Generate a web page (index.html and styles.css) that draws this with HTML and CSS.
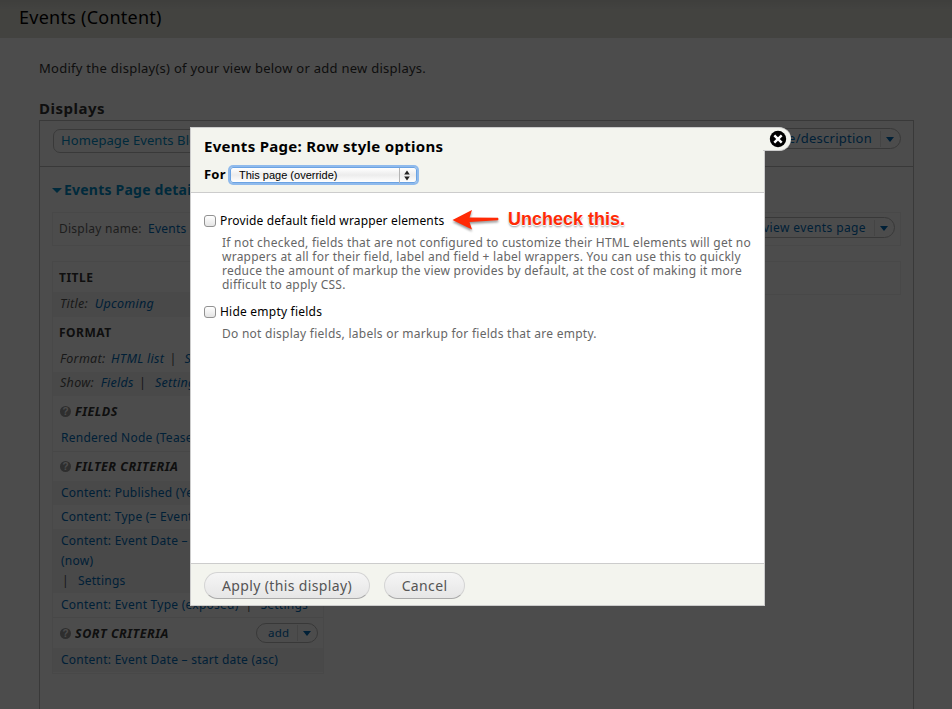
FILE: index.html
```
<!DOCTYPE html>
<html lang="en">
<head>
<meta charset="utf-8">
<title>Events (Content)</title>
<link rel="stylesheet" href="styles.css">
</head>
<body>
<div class="page">
  <header class="branding"><h1>Events (Content)</h1></header>
  <main class="content">
    <p class="intro">Modify the display(s) of your view below or add new displays.</p>
    <h2 class="displays-title">Displays</h2>
    <section class="displays">
      <div class="tabs">
        <a class="tab">Homepage Events Block</a>
        <div class="dropbutton wide"><a>edit view name/description</a><i class="arrow"></i></div>
      </div>
      <div class="details">
        <h3 class="details-title"><i class="arrow"></i>Events Page details</h3>
        <div class="name-bar">
          <span class="label">Display name:</span><a>Events Page</a>
          <div class="dropbutton view"><a>view events page</a><i class="arrow"></i></div>
        </div>
        <div class="buckets">
          <div class="column">
            <h4 class="first">Title</h4>
            <div class="row odd setting">Title: <a>Upcoming</a></div>
            <h4 class="format">Format</h4>
            <div class="row setting">Format: <a>HTML list</a><span class="bar">|</span><a>Settings</a></div>
            <div class="row odd setting show">Show: <a>Fields</a><span class="bar">|</span><a>Settings</a></div>
            <h4 class="help"><i class="q">?</i><em>Fields</em></h4>
            <div class="row item tall"><a>Rendered Node (Teaser)</a></div>
            <h4 class="help ruled"><i class="q">?</i><em>Filter criteria</em></h4>
            <div class="row odd item"><a>Content: Published (Yes)</a></div>
            <div class="row item"><a>Content: Type (= Event)</a></div>
            <div class="row odd item multi"><a>Content: Event Date – start date (&gt;=</a><br><a>(now)</a><br><span class="bar">|</span><a>Settings</a></div>
            <div class="row item"><a>Content: Event Type (exposed)</a><span class="bar">|</span><a>Settings</a></div>
            <h4 class="help ruled sort"><i class="q">?</i><em>Sort criteria</em><span class="dropbutton add"><a>add</a><i class="arrow"></i></span></h4>
            <div class="row odd item"><a>Content: Event Date – start date (asc)</a></div>
          </div>
          <div class="side"></div>
        </div>
      </div>
    </section>
  </main>
</div>
<div class="overlay"></div>
<div class="dialog">
  <div class="dialog-head">
    <h2>Events Page: Row style options</h2>
    <div class="for"><b>For</b>
      <div class="select"><span>This page (override)</span>
        <svg width="17" height="15" viewBox="0 0 17 15"><path d="M.5 0v15" stroke="#b5b5b5"/><path d="M5.200 6.500 8 2.500l2.800 4zM5.200 8.500h5.600L8 12.500z" fill="#222"/></svg>
      </div>
    </div>
  </div>
  <div class="dialog-body">
    <label class="check"><i></i>Provide default field wrapper elements</label>
    <p>If not checked, fields that are not configured to customize their HTML elements will get no<br>wrappers at all for their field, label and field + label wrappers. You can use this to quickly<br>reduce the amount of markup the view provides by default, at the cost of making it more<br>difficult to apply CSS.</p>
    <label class="check second"><i></i>Hide empty fields</label>
    <p class="last">Do not display fields, labels or markup for fields that are empty.</p>
    <div class="callout">
      <svg width="48" height="24" viewBox="0 0 48 24"><path d="M.5 12 20 2 17.500 9.500 46 9.800Q47 11 46 12.300L17.500 14 20 21.500z" fill="#ff2a05"/></svg>
      <strong>Uncheck this.</strong>
    </div>
  </div>
  <div class="dialog-foot"><button>Apply (this display)</button><button class="cancel">Cancel</button></div>
  <div class="close"><svg width="18" height="18" viewBox="0 0 18 18"><circle cx="9" cy="9" r="8.200"/><path d="M5.300 5.300l7.400 7.400M12.700 5.300l-7.400 7.400" stroke="#fff" stroke-width="2.400"/></svg></div>
</div>
</body>
</html>
```
FILE: styles.css
```
* { box-sizing: border-box; }
body { margin: 0; width: 952px; height: 709px; overflow: hidden; position: relative; background: #fff; font-family: "Noto Sans", sans-serif; font-size: 12px; letter-spacing: .25px; color: #333; }
h1, h2, h3, h4, p { margin: 0; }
a { color: #006bb8; white-space: nowrap; }
.page { height: 709px; overflow: hidden; }
.branding { height: 38px; padding: 4px 0 0 19px; background: linear-gradient(#d2d2cb, #e0e0d8 10px); }
.branding h1 { font-size: 18px; font-weight: 400; line-height: 27px; letter-spacing: .25px; color: #000; }
.content { padding: 20px 38px 0 39px; }
.intro { font-size: 13px; line-height: 20px; letter-spacing: .26px; }
.displays-title { margin-top: 20px; font-size: 15px; line-height: 20px; letter-spacing: .5px; color: #333; }
.displays { width: 875px; margin-top: 2px; height: 620px; border: 1px solid #c0c0c0; }
.tabs { display: flex; justify-content: space-between; align-items: flex-start; height: 46px; padding: 8px 12px 0 13px; border-bottom: 1px solid #c0c0c0; }
.tab { height: 24px; padding: 0 7px; border: 1px solid #c0c0c0; border-radius: 7px; font-size: 13px; line-height: 21px; letter-spacing: .1px; color: #008cc8; }
.arrow { display: inline-block; border: 4.500px solid transparent; border-top: 5px solid currentColor; border-bottom: 0; color: #006bb8; }
.dropbutton { display: flex; align-items: center; height: 21px; border: 1px solid #bbb; border-radius: 11px; color: #006bb8; }
.dropbutton a { line-height: 15px; border-right: 1px solid #e4e4e4; padding: 0 9px 0 13px; height: 16px; }
.dropbutton .arrow { margin: 1px 6px 0 5px; }
.dropbutton.view { margin: -1px 0 0 auto; letter-spacing: .4px; }
.dropbutton.view a { padding-right: 8px; }
.dropbutton.wide { margin-top: -1px; letter-spacing: .25px; font-size: 13px; }
.dropbutton.wide a { padding-right: 8px; }
.dropbutton.add { margin: -1px 0 0 auto; width: 62px; height: 20px; font-size: 11.500px; font-weight: 400; text-transform: none; letter-spacing: .2px; }
.dropbutton.add a { width: 42px; padding: 0 0 0 11px; }
.details { padding: 12px 12px 0; }
.details-title { display: flex; align-items: center; height: 22px; font-size: 14px; line-height: 22px; letter-spacing: .22px; color: #008cc8; }
.details-title .arrow { margin-right: 2px; border-left-width: 5px; border-right-width: 5px; color: #008cc8; }
.name-bar { display: flex; align-items: center; height: 34px; margin-top: 11px; padding: 0 5px 2px 6px; border: 1px solid #f0f0f0; }
.name-bar .label { width: 89px; color: #666; }
.buckets { display: flex; align-items: flex-start; justify-content: space-between; margin-top: 15px; }
.column { flex: none; width: 272px; height: 413px; border: 1px solid #f2f2f2; }
.side { width: 570px; height: 34px; border: 1px solid #f0f0f0; margin-left: 7px; }
.column h4 { display: flex; align-items: center; height: 30px; padding: 0 5px 0 6px; font-size: 12px; letter-spacing: .5px; text-transform: uppercase; color: #333; }
.column h4.first { padding-top: 1px; }
.column h4.help { padding-left: 7px; }
.column h4.ruled { border-top: 1px solid #efefef; }
.column h4.sort { height: 31px; }
.column h4 em { font-size: 12.500px; letter-spacing: .5px; }
.q { display: flex; align-items: center; justify-content: center; width: 11px; height: 11px; margin-right: 4px; border-radius: 50%; background: #999; color: #fff; font: bold 10px "Liberation Sans", sans-serif; letter-spacing: 0; }
.row { height: 24px; line-height: 24px; padding-left: 8px; white-space: nowrap; color: #555; }
.row.odd { background: #f4f4f4; }
.row.tall { height: 25px; }
.row.setting { height: 25px; line-height: 24px; padding-left: 7px; font-style: italic; font-size: 12.500px; letter-spacing: .3px; }
.row.setting a { margin-left: 2px; }
.row.odd.setting a { margin-left: 3px; }
.row.setting.show { height: 24px; line-height: 21px; }
.row .bar { margin: 0 8px 0 7px; }
.row.setting .bar { margin: 0 6px 0 5px; }
.row.multi { height: 64px; line-height: 20px; padding-top: 2px; }
.row.multi .bar { margin: 0 9px 0 1px; }
.overlay { position: absolute; inset: 0; background: rgba(0, 0, 0, .7); }
.dialog { position: absolute; left: 190px; top: 127px; width: 575px; height: 479px; display: flex; flex-direction: column; border: 1px solid #ccc; background: #fff; }
.dialog-head { height: 65px; padding: 8px 13px 0; background: #f3f4ee; border-bottom: 1px solid #ccc; }
.dialog-head h2 { font-size: 15px; line-height: 21px; letter-spacing: .29px; color: #000; }
.for { display: flex; align-items: center; height: 20px; margin-top: 8px; color: #000; }
.for b { font-size: 13px; line-height: 18px; width: 26px; margin-top: -2px; letter-spacing: .2px; }
.select { display: flex; align-items: center; justify-content: space-between; width: 187px; height: 16px; padding-left: 8px; border: 1px solid #6ba3e3; border-radius: 3px; background: linear-gradient(#fff, #ececec 50%, #fff); box-shadow: 0 0 0 2px #8fbaec; font: 11px "Liberation Sans", sans-serif; letter-spacing: 0; }
.dialog-body { flex: 1; position: relative; padding: 17px 13px; }
.check { display: flex; align-items: center; height: 20px; color: #000; letter-spacing: .15px; font-size: 12px; }
.check.second { margin-top: 9px; letter-spacing: .22px; }
.check i { width: 12px; height: 12px; margin: 1px 4px 0 0; border: 1px solid #929292; border-radius: 3px; background: linear-gradient(#fff, #e4e4e4); }
.dialog-body p { margin: 6px 0 0 18px; line-height: 14px; color: #666; letter-spacing: .24px; white-space: nowrap; }
.dialog-body p.last { letter-spacing: .26px; }
.callout { position: absolute; left: 261px; top: 15px; display: flex; align-items: center; }
.callout svg { filter: drop-shadow(0 2px 1px rgba(0, 0, 0, .4)); }
.callout strong { margin: -2px 0 0 8px; font: bold 18px/20px "Liberation Sans", sans-serif; letter-spacing: 0; color: #ff2a05; text-shadow: 0 0 1px #fff, 0 1px 0 #fff, 0 2px 2px rgba(0, 0, 0, .4); }
.dialog-foot { display: flex; gap: 14px; height: 42px; padding: 8px 13px; background: #f3f4ee; border-top: 1px solid #ccc; }
button { width: 166px; height: 27px; padding: 0; border: 1px solid #d4d4d4; border-bottom-color: #aaa; border-radius: 14px; background: linear-gradient(#f5f5f5, #e6e6e6); font: 14px "Noto Sans", sans-serif; letter-spacing: .36px; color: #555; }
.cancel { width: 81px; }
.close { position: absolute; left: 572px; top: -1px; width: 28px; height: 24px; padding: 2px 0 0 6px; border-radius: 0 12px 12px 0; background: #f3f4ee; border-top: 1px solid #ccc; border-bottom: 1px solid #ccc; }
.close svg { display: block; }
```
